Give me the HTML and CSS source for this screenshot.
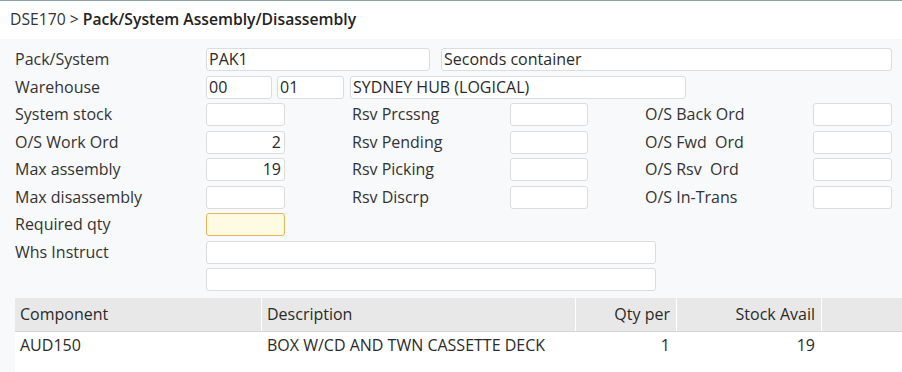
FILE: index.html
```html
<!DOCTYPE html>
<html>
<head>
<meta charset="utf-8">
<link rel="stylesheet" href="styles.css">
</head>
<body>
<div class="page">
  <header class="titlebar">
    <span class="crumb">DSE170 &gt; </span><span class="title">Pack/System Assembly/Disassembly</span>
  </header>
  <section class="form">
    <div class="lbl r1">Pack/System</div>
    <div class="span r1">
      <div class="inp w-pak">PAK1</div>
      <div class="inp grow gap11">Seconds container</div>
    </div>

    <div class="lbl r2">Warehouse</div>
    <div class="span r2">
      <div class="inp w-00">00</div>
      <div class="inp w-01 gap5">01</div>
      <div class="inp w-whs gap6">SYDNEY HUB (LOGICAL)</div>
    </div>

    <div class="lbl c1 r3">System stock</div>
    <div class="inp num c2 r3"></div>
    <div class="lbl c4 r3">Rsv Prcssng</div>
    <div class="inp num c5 r3"></div>
    <div class="lbl c7 r3">O/S Back Ord</div>
    <div class="inp num c8 r3"></div>

    <div class="lbl c1 r4">O/S Work Ord</div>
    <div class="inp num c2 r4">2</div>
    <div class="lbl c4 r4">Rsv Pending</div>
    <div class="inp num c5 r4"></div>
    <div class="lbl c7 r4">O/S Fwd&nbsp; Ord</div>
    <div class="inp num c8 r4"></div>

    <div class="lbl c1 r5">Max assembly</div>
    <div class="inp num c2 r5">19</div>
    <div class="lbl c4 r5">Rsv Picking</div>
    <div class="inp num c5 r5"></div>
    <div class="lbl c7 r5">O/S Rsv&nbsp; Ord</div>
    <div class="inp num c8 r5"></div>

    <div class="lbl c1 r6">Max disassembly</div>
    <div class="inp num c2 r6"></div>
    <div class="lbl c4 r6">Rsv Discrp</div>
    <div class="inp num c5 r6"></div>
    <div class="lbl c7 r6">O/S In-Trans</div>
    <div class="inp num c8 r6"></div>

    <div class="lbl c1 r7">Required qty</div>
    <div class="inp num req c2 r7"></div>

    <div class="lbl c1 r8">Whs Instruct</div>
    <div class="span r8"><div class="inp w-ins"></div></div>

    <div class="span r9"><div class="inp w-ins"></div></div>
  </section>
  <section class="grid">
    <div class="row head">
      <div class="cell">Component</div>
      <div class="cell">Description</div>
      <div class="cell right">Qty per</div>
      <div class="cell right">Stock Avail</div>
      <div class="cell"></div>
    </div>
    <div class="row body">
      <div class="cell">AUD150</div>
      <div class="cell">BOX W/CD AND TWN CASSETTE DECK</div>
      <div class="cell right">1</div>
      <div class="cell right">19</div>
      <div class="cell"></div>
    </div>
  </section>
</div>
</body>
</html>
```
FILE: styles.css
```css
html, body {
  margin: 0;
  padding: 0;
  background: #ffffff;
}
body {
  font-family: "Open Sans", "Liberation Sans", sans-serif;
  color: #333333;
  overflow: hidden;
}
.page {
  border-top: 1px solid #8e9ea7;
}
.titlebar {
  height: 38px;
  line-height: 36px;
  padding-left: 10px;
  font-size: 15.7px;
  background: #ffffff;
  white-space: nowrap;
}
.crumb {
  color: #333333;
}
.title {
  color: #222222;
  font-weight: 600;
}
.form {
  background: #f8f9fb;
  padding: 9px 10px 7px 15px;
  display: grid;
  grid-template-columns: 191px 79px 67px 158px 78px 57px 168px 79px;
  grid-template-rows: repeat(4, 28px 27px) 23px;
  font-size: 16px;
}
.lbl {
  height: 23px;
  line-height: 23px;
  white-space: nowrap;
  color: #333333;
}
.inp {
  box-sizing: border-box;
  height: 23px;
  line-height: 21px;
  border: 1px solid #dcdcdc;
  border-radius: 3px;
  background: #ffffff;
  padding: 0 3px 0 2px;
  font-size: 16px;
  color: #2a2a2a;
  white-space: nowrap;
  overflow: hidden;
}
.num {
  text-align: right;
}
.req {
  background: #fffbe3;
  border-color: #e7b556;
}
.span {
  grid-column: 2 / -1;
  display: flex;
  height: 23px;
}
.c1 { grid-column: 1; }
.c2 { grid-column: 2; }
.c4 { grid-column: 4; }
.c5 { grid-column: 5; }
.c7 { grid-column: 7; }
.c8 { grid-column: 8; }
.r1 { grid-row: 1; }
.r2 { grid-row: 2; }
.r3 { grid-row: 3; }
.r4 { grid-row: 4; }
.r5 { grid-row: 5; }
.r6 { grid-row: 6; }
.r7 { grid-row: 7; }
.r8 { grid-row: 8; }
.r9 { grid-row: 9; }
.w-pak { width: 224px; flex: none; }
.grow { flex: 1; }
.gap11 { margin-left: 11px; }
.gap5 { margin-left: 5px; }
.gap6 { margin-left: 6px; }
.w-00 { width: 66px; flex: none; }
.w-01 { width: 67px; flex: none; }
.w-whs { width: 336px; flex: none; }
.w-ins { width: 450px; flex: none; }
.grid {
  background: #f8f9fb;
  padding-left: 15px;
  font-size: 16px;
}
.row {
  display: grid;
  grid-template-columns: 246px 314px 101px 145px 1fr;
}
.head {
  background: #e8e8e8;
  height: 34px;
  border-bottom: 1px solid #d6d6d6;
  box-sizing: border-box;
}
.head .cell {
  line-height: 33px;
}
.head .cell + .cell {
  border-left: 1px solid #ffffff;
}
.body {
  background: #ffffff;
  height: 40px;
}
.body .cell {
  line-height: 26px;
}
.body .cell + .cell {
  border-left: 1px solid transparent;
}
.cell {
  padding: 0 6px 0 5px;
  white-space: nowrap;
  overflow: hidden;
  color: #2a2a2a;
}
.right {
  text-align: right;
}
```
